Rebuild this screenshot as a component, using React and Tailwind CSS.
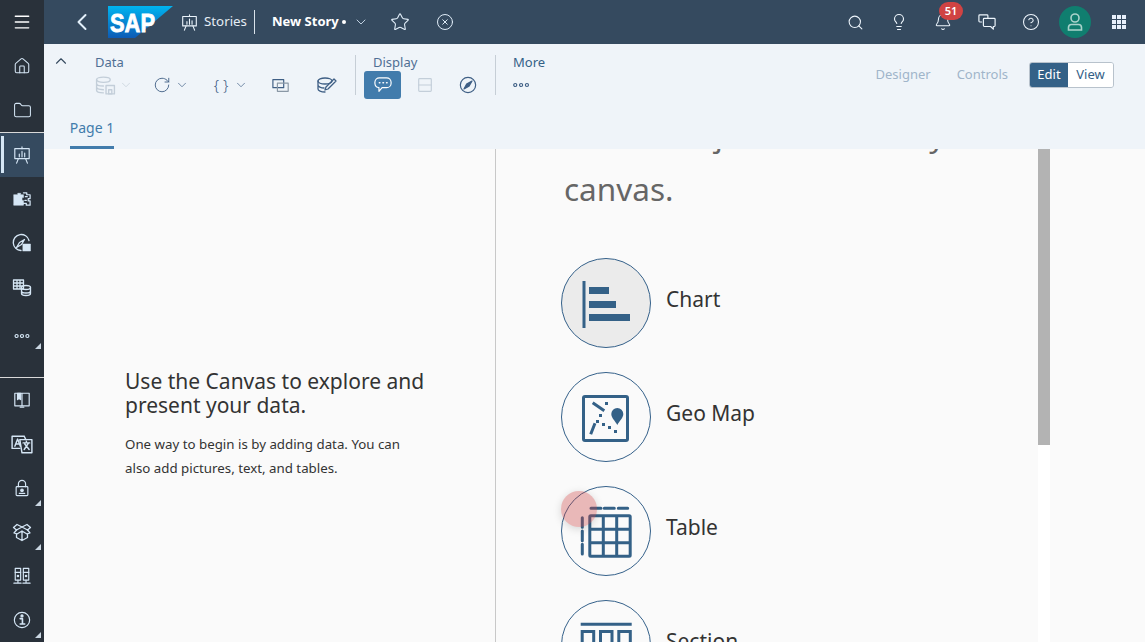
import React from 'react';
import { ChevronLeft, ChevronDown, ChevronUp, Star, CircleX, Search, Lightbulb, Bell, CircleHelp, House, Folder, RotateCw, Menu } from 'lucide-react';

const thin = { fill: 'none', stroke: 'currentColor', strokeWidth: 1.3, strokeLinecap: 'round', strokeLinejoin: 'round' };

// small line icon wrapper, every icon is drawn on a 20 box
const Ico = ({ children, className = 'w-5 h-5' }) => (
  <svg viewBox="0 0 20 20" className={className} {...thin}>{children}</svg>
);

const StoryIcon = ({ className }) => (
  <Ico className={className}>
    <rect x="2" y="3" width="16" height="11" />
    <path d="M10 1v2M6 14l-2 5M14 14l2 5M7 12V9M10 12V6M13 12V8" />
  </Ico>
);

const Corner = ({ pos }) => (
  <span className={`absolute right-[3px] w-0 h-0 border-l-[6px] border-b-[6px] border-l-transparent border-b-[#c9d6e2] ${pos}`} />
);

const SideItem = ({ children, corner, active, className = '' }) => (
  <div className={`relative h-[44px] flex justify-center items-center text-[#d5e6f5] ${active ? 'bg-[#354a5f]' : ''} ${className}`}>
    {active && <span className="absolute left-[1px] top-[3px] w-[3px] h-[37px] bg-[#d5e6f5]" />}
    {children}
    {corner && <Corner pos="bottom-[4px]" />}
  </div>
);

const Sidebar = () => (
  <aside className="w-[44px] shrink-0 bg-[#29313a] flex flex-col justify-between">
    <div>
      <SideItem><Menu size={20} strokeWidth={1.7} className="text-white" /></SideItem>
      <SideItem><House size={18} strokeWidth={1.4} /></SideItem>
      <SideItem><Folder size={19} strokeWidth={1.3} /></SideItem>
      <div className="h-px bg-[#d9d9d9]" />
      <SideItem active><StoryIcon className="w-[18px] h-[18px]" /></SideItem>
      <SideItem>
        <Ico className="w-[19px] h-[19px]">
          <path d="M1 5h4V3.500h3V5h3v3H9.500v3H11v5H1z" fill="currentColor" strokeWidth="0.6" />
          <path d="M11 3h3.500v2H18v4h-2v2.500h2V16h-4v-2h-3" />
          <path d="M13 7h2M12.500 11h1.500" />
        </Ico>
      </SideItem>
      <SideItem>
        <Ico className="w-[20px] h-[20px]">
          <path d="M9 17.500a8 8 0 1 1 8-10" />
          <path d="M4.500 14.500l3-5 5-3-3 5z" />
          <rect x="11" y="11" width="7.500" height="7" fill="currentColor" strokeWidth="0.5" />
        </Ico>
      </SideItem>
      <SideItem>
        <Ico className="w-[20px] h-[20px]">
          <path d="M1.500 3h10v9h-10zM1.500 6h10M1.500 9h10M5 3v9M8 3v9" />
          <ellipse cx="14" cy="10.500" rx="4.500" ry="2" />
          <path d="M9.500 10.500v6c0 1 2 2 4.500 2s4.500-1 4.500-2v-6M9.500 14c0 1 2 2 4.500 2s4.500-1 4.500-2" />
        </Ico>
      </SideItem>
      <SideItem className="items-end pb-[8px]">
        <Ico className="w-[18px] h-[18px]">
          <circle cx="4" cy="10" r="1.700" /><circle cx="10" cy="10" r="1.700" /><circle cx="16" cy="10" r="1.700" />
        </Ico>
        <Corner pos="bottom-[4px]" />
      </SideItem>
    </div>
    <div>
      <div className="h-px bg-[#d9d9d9]" />
      <SideItem>
        <Ico className="w-[18px] h-[18px]">
          <path d="M2 2.500h16v14H2zM10 2.500v14" />
          <path d="M5 2.500h3.500v7L6.800 8 5 9.500z" fill="currentColor" />
          <path d="M8 18h4" />
        </Ico>
      </SideItem>
      <SideItem>
        <Ico className="w-[22px] h-[22px]">
          <path d="M1 3h11M1 3v11h7M12 3l1.500 3" />
          <path d="M8 6h11v12H10z" />
          <path d="M3.500 12l2.500-6.500L8.500 12M4.400 10h3.200M11 9h6M14 7.500V9M12 15l4-6M12.500 10l4 5" />
        </Ico>
      </SideItem>
      <SideItem corner>
        <Ico className="w-[18px] h-[18px]">
          <rect x="3.500" y="8.500" width="13" height="10" rx="1" />
          <path d="M6 8.500V5.500a4 4 0 0 1 8 0v3" />
          <circle cx="10" cy="12.500" r="1.400" fill="currentColor" />
          <path d="M7 16h6" />
        </Ico>
      </SideItem>
      <SideItem corner>
        <Ico className="w-[20px] h-[20px]">
          <path d="M10 5L5 2.500 1.500 5.500l3 2.500L10 5l5.500 3 3-2.500L15 2.500z" />
          <path d="M4.500 8L2 11l3 1 5-3 5 3 3-1-2.500-3M4.500 12v3.500L10 18.500l5.500-3V12M10 9v9.500" />
        </Ico>
      </SideItem>
      <SideItem>
        <Ico className="w-[18px] h-[18px]">
          <rect x="2.500" y="1.500" width="6" height="13" />
          <rect x="11.500" y="1.500" width="6" height="13" />
          <path d="M2.500 6h6M11.500 6h6M5.500 14.500v3M14.500 14.500v3M1 18h8M11 18h8" />
          <circle cx="5.500" cy="10" r="0.800" fill="currentColor" />
          <circle cx="14.500" cy="10" r="0.800" fill="currentColor" />
        </Ico>
      </SideItem>
      <SideItem corner>
        <Ico className="w-[18px] h-[18px]">
          <circle cx="10" cy="10" r="8.500" />
          <circle cx="10" cy="5.500" r="1.200" fill="currentColor" />
          <path d="M8 8.500h2.500V14M8 14.500h5" strokeWidth="1.800" />
        </Ico>
      </SideItem>
    </div>
  </aside>
);

const SapLogo = () => (
  <svg viewBox="0 0 65 32" className="w-[65px] h-[32px] shrink-0">
    <defs>
      <linearGradient id="sapBlue" x1="0" y1="0" x2="0" y2="1">
        <stop offset="0" stopColor="#00b4f0" />
        <stop offset="1" stopColor="#0d5bb5" />
      </linearGradient>
    </defs>
    <polygon points="0,0 65,0 27,32 0,32" fill="url(#sapBlue)" />
    <text x="2" y="26" fill="#fff" stroke="#fff" strokeWidth="0.8" fontFamily="'Liberation Sans', sans-serif" fontWeight="700" fontSize="26" textLength="45" lengthAdjust="spacingAndGlyphs">SAP</text>
  </svg>
);

const HeaderIcon = ({ children, className = '' }) => (
  <div className={`relative w-[44px] h-[44px] flex items-center justify-center text-[#eef6fd] ${className}`}>{children}</div>
);

const Header = () => (
  <header className="h-[44px] bg-[#354a5f] flex items-center text-white shrink-0">
    <ChevronLeft size={28} strokeWidth={1.7} className="text-[#e3f0fb] ml-[24px] mr-[12px]" />
    <SapLogo />
    <StoryIcon className="w-[17px] h-[17px] ml-[8px] text-[#eaf3fb]" />
    <span className="ml-[6px] w-[42px] whitespace-nowrap text-[13.300px] text-[#e5edf5]">Stories</span>
    <span className="ml-[8px] w-px h-[24px] bg-[#d9e2ea]" />
    <span className="ml-[17px] w-[66px] whitespace-nowrap text-[13px] font-bold">New Story</span>
    <span className="ml-[4px] w-[4px] h-[4px] rounded-full bg-white" />
    <ChevronDown size={16} strokeWidth={1.3} className="ml-[7px] text-[#d5e6f5]" />
    <Star size={20} strokeWidth={1.3} className="ml-[21px] text-[#e3f0fb]" />
    <CircleX size={18} strokeWidth={1.3} className="ml-[26px] text-[#e3f0fb]" />
    <div className="ml-auto flex pr-[4px]">
      <HeaderIcon><Search size={17} strokeWidth={1.5} /></HeaderIcon>
      <HeaderIcon><Lightbulb size={18} strokeWidth={1.5} /></HeaderIcon>
      <HeaderIcon>
        <Bell size={18} strokeWidth={1.4} />
        <span className="absolute left-[18px] top-[2px] w-[24px] h-[18px] rounded-full bg-[#d04343] text-white text-[11px] font-semibold flex items-center justify-center">51</span>
      </HeaderIcon>
      <HeaderIcon>
        <Ico className="w-[18px] h-[18px]">
          <path d="M11 6V3a1 1 0 0 0-1-1H2a1 1 0 0 0-1 1v6a1 1 0 0 0 1 1h2" />
          <path d="M7 6h11a1 1 0 0 1 1 1v7a1 1 0 0 1-1 1h-1v3l-3-3H7a1 1 0 0 1-1-1V7a1 1 0 0 1 1-1z" />
        </Ico>
      </HeaderIcon>
      <HeaderIcon><CircleHelp size={18} strokeWidth={1.4} /></HeaderIcon>
      <HeaderIcon>
        <span className="w-[32px] h-[32px] rounded-full bg-[#107e6f] flex items-center justify-center text-[#a9d3cb]">
          <svg viewBox="0 0 20 20" className="w-[20px] h-[20px]" fill="none" stroke="currentColor" strokeWidth="1.600">
            <circle cx="10" cy="6" r="4" />
            <path d="M3.500 18v-2.500a3 3 0 0 1 3-3h7a3 3 0 0 1 3 3V18z" />
          </svg>
        </span>
      </HeaderIcon>
      <HeaderIcon>
        <svg viewBox="0 0 15 15" className="w-[15px] h-[15px]" fill="#e8f0fb">
          {[0, 5, 10].map(y => [0, 5, 10].map(x => <rect key={`${x}-${y}`} x={x} y={y} width="4" height="4" />))}
        </svg>
      </HeaderIcon>
    </div>
  </header>
);

const Label = ({ children, className = '' }) => (
  <div className={`h-[17px] leading-[17px] text-[13px] text-[#4f6f94] ${className}`}>{children}</div>
);

const Divider = ({ className = '' }) => <span className={`w-px h-[40px] mt-px bg-[#c6ced6] shrink-0 ${className}`} />;

const Toolbar = () => (
  <div className="bg-[#eff4f9] h-[105px] shrink-0 flex flex-col">
    <div className="h-[66px] flex items-start pt-[10px] pr-[31px]">
      <div className="w-[51px] pl-[8px]">
        <ChevronUp size={18} strokeWidth={1.5} className="text-[#354a5f] -mt-[2px]" />
      </div>
      <div>
        <Label>Data</Label>
        <div className="flex items-center h-[28px] text-[#3f5f85]">
          <Ico className="w-[21px] h-[21px] text-[#c3ced9]">
            <ellipse cx="8" cy="4.500" rx="6.500" ry="2.500" />
            <path d="M1.500 4.500v10c0 1.300 2.500 2.500 6.500 2.500M1.500 8c0 1.300 2.500 2.500 6.500 2.500M1.500 11.500c0 1.300 2.500 2.500 6.500 2.500" />
            <rect x="10.500" y="10" width="8" height="8" />
            <rect x="13" y="14" width="3" height="4" />
          </Ico>
          <ChevronDown size={14} strokeWidth={1.2} className="ml-[3px] text-[#c3ced9]" />
          <RotateCw size={18} strokeWidth={1.2} className="ml-[20px]" />
          <ChevronDown size={14} strokeWidth={1.2} className="ml-[4px]" />
          <span className="ml-[23px] w-[18px] whitespace-nowrap text-center text-[15px] leading-none font-light text-[#3f5f85]">{'{ }'}</span>
          <ChevronDown size={14} strokeWidth={1.2} className="ml-[4px]" />
          <Ico className="ml-[24px] w-[18px] h-[18px]">
            <rect x="1" y="4" width="12" height="9" />
            <rect x="6" y="8" width="12" height="9" className="text-[#8a98a6]" />
          </Ico>
          <Ico className="ml-[27px] w-[20px] h-[20px]">
            <ellipse cx="8" cy="6" rx="7" ry="3" />
            <path d="M1 6v8c0 1.500 3 3 7 3M1 10c0 1.500 3 3 6 3" />
            <path d="M8 15l1-3 8-8 2 2-8 8z" />
          </Ico>
        </div>
      </div>
      <Divider className="ml-[18px]" />
      <div className="ml-[8px]">
        <Label className="pl-[9px]">Display</Label>
        <div className="flex items-center h-[28px]">
          <span className="w-[37px] h-[28px] rounded-[3px] bg-[#427cac] flex items-center justify-center text-white">
            <Ico className="w-[18px] h-[18px]">
              <path d="M6 2h8a5 5 0 0 1 5 5v1a5 5 0 0 1-5 5H9l-3.500 4v-4.200A5 5 0 0 1 1 8V7a5 5 0 0 1 5-5z" />
              <path d="M6 7.500h.5M10 7.500h.5M14 7.500h.5" strokeWidth="1.800" />
            </Ico>
          </span>
          <Ico className="ml-[15px] w-[18px] h-[18px] text-[#c3ced9]">
            <rect x="3" y="3" width="14" height="14" rx="1" />
            <path d="M3 10h14" />
          </Ico>
          <Ico className="ml-[25px] w-[18px] h-[18px] text-[#3f5f85]">
            <circle cx="10" cy="10" r="8.500" />
            <path d="M5.500 14.500l3-5.500 6-3.500-3.500 6z" fill="currentColor" />
          </Ico>
        </div>
      </div>
      <Divider className="ml-[18px]" />
      <div className="ml-[17px]">
        <Label className="text-[#346187]">More</Label>
        <Ico className="w-[18px] h-[28px] text-[#3f5f85]">
          <circle cx="2.500" cy="10" r="1.700" /><circle cx="9" cy="10" r="1.700" /><circle cx="15.500" cy="10" r="1.700" />
        </Ico>
      </div>
      <div className="ml-auto mt-[8px] flex items-center text-[13px] text-[#a0b5ca]">
        <span>Designer</span>
        <span className="ml-[26px]">Controls</span>
        <div className="ml-[21px] flex h-[26px] rounded-[3px] overflow-hidden border border-[#b8c2cc]">
          <span className="w-[38px] bg-[#346187] text-white flex items-center justify-center">Edit</span>
          <span className="w-[45px] bg-white text-[#346187] flex items-center justify-center">View</span>
        </div>
      </div>
    </div>
    <div className="flex-1 pl-[26px] flex">
      <div className="w-[44px] whitespace-nowrap flex items-center justify-center text-[14px] text-[#427cac] border-b-[3px] border-[#427cac] pb-[2px]">Page 1</div>
    </div>
  </div>
);

const ChartGlyph = () => (
  <g fill="#346187">
    <rect x="21.500" y="23" width="3" height="47" />
    <rect x="28" y="29" width="20" height="7" />
    <rect x="28" y="43" width="27" height="7" />
    <rect x="28" y="56" width="41" height="7" />
  </g>
);

const GeoGlyph = () => (
  <g>
    <rect x="22.500" y="24.500" width="44" height="44" rx="1.500" fill="none" stroke="#346187" strokeWidth="3" />
    <path d="M31.700 30.700L43.300 38.700M34 51.300L29.700 62.300" stroke="#346187" strokeWidth="3" />
    <g fill="#346187">
      <rect x="44" y="30" width="3" height="3" /><rect x="38" y="42" width="3" height="3" />
      <rect x="35" y="48" width="3" height="3" /><rect x="41" y="51" width="3" height="3" />
      <rect x="47" y="54" width="3" height="3" /><rect x="53" y="58" width="3" height="3" />
      <path d="M50.300 42a6 6 0 0 1 12 0c0 4-4 7-6 11-2-4-6-7-6-11z" />
    </g>
  </g>
);

const TableGlyph = () => (
  <g fill="none" stroke="#346187" strokeWidth="3">
    <rect x="28.800" y="29.800" width="40.400" height="40.400" rx="1" />
    <path d="M42.300 29.800v40.400M55.700 29.800v40.400M28.800 43.300h40.400M28.800 56.700h40.400" />
    <path d="M30 22.300h10M43.300 22.300h10M57.300 22.300h9.400M21.300 31.700v9.600M21.300 45v9.700M21.300 58.300V68" strokeLinecap="round" />
  </g>
);

const SectionGlyph = () => (
  <g fill="none" stroke="#346187" strokeWidth="3">
    <path d="M19.700 24.300h51" />
    <rect x="21.200" y="31.500" width="11.500" height="12" />
    <rect x="39.500" y="31.500" width="11.500" height="12" />
    <rect x="57.800" y="31.500" width="11.500" height="12" />
  </g>
);

const ObjectRow = ({ label, glyph, selected }) => (
  <div className="flex items-center h-[90px] shrink-0">
    <div className={`w-[90px] h-[90px] rounded-full border border-[#35618a] shrink-0 ${selected ? 'bg-[#ebebeb]' : ''}`}>
      <svg viewBox="1 1 88 88" className="w-[88px] h-[88px]">{glyph}</svg>
    </div>
    <span className="ml-[15px] text-[21px] leading-[28px] text-[#333] mb-[8px]">{label}</span>
  </div>
);

export default function App() {
  return (
    <div className="relative w-[1145px] h-[642px] overflow-hidden flex bg-[#fafafa] font-['Noto_Sans','Open_Sans',sans-serif]">
      <Sidebar />
      <div className="flex-1 flex flex-col min-w-0">
        <Header />
        <Toolbar />
        <main className="flex-1 flex min-h-0">
          <section className="w-[451px] shrink-0 pt-[220px] pl-[81px] pr-[60px]">
            <h2 className="text-[21px] leading-[24px] text-[#333]">Use the Canvas to explore and present your data.</h2>
            <p className="mt-[15px] max-w-[285px] text-[13.300px] leading-[24px] text-[#333]">One way to begin is by adding data. You can also add pictures, text, and tables.</p>
          </section>
          <section className="w-[543px] shrink-0 border-l border-[#c8c8c8] overflow-hidden pl-[65px]">
            <h1 className="-mt-[41px] pl-[3px] pr-[60px] text-[31.500px] leading-[54px] text-[#666]">Add an object to the story canvas.</h1>
            <div className="mt-[42px] flex flex-col gap-[24px]">
              <ObjectRow label="Chart" glyph={<ChartGlyph />} selected />
              <ObjectRow label="Geo Map" glyph={<GeoGlyph />} />
              <ObjectRow label="Table" glyph={<TableGlyph />} />
              <ObjectRow label="Section" glyph={<SectionGlyph />} />
            </div>
          </section>
          <div className="w-[12px] shrink-0 bg-white">
            <div className="h-[296px] bg-[#b3b3b3]" />
          </div>
        </main>
      </div>
      {/* click indicator from the recording */}
      <span className="absolute left-[561px] top-[491px] w-[36px] h-[36px] rounded-full bg-[#c83c3c]/35 shadow-[0_2px_8px_rgba(0,0,0,0.15)]" />
    </div>
  );
}
